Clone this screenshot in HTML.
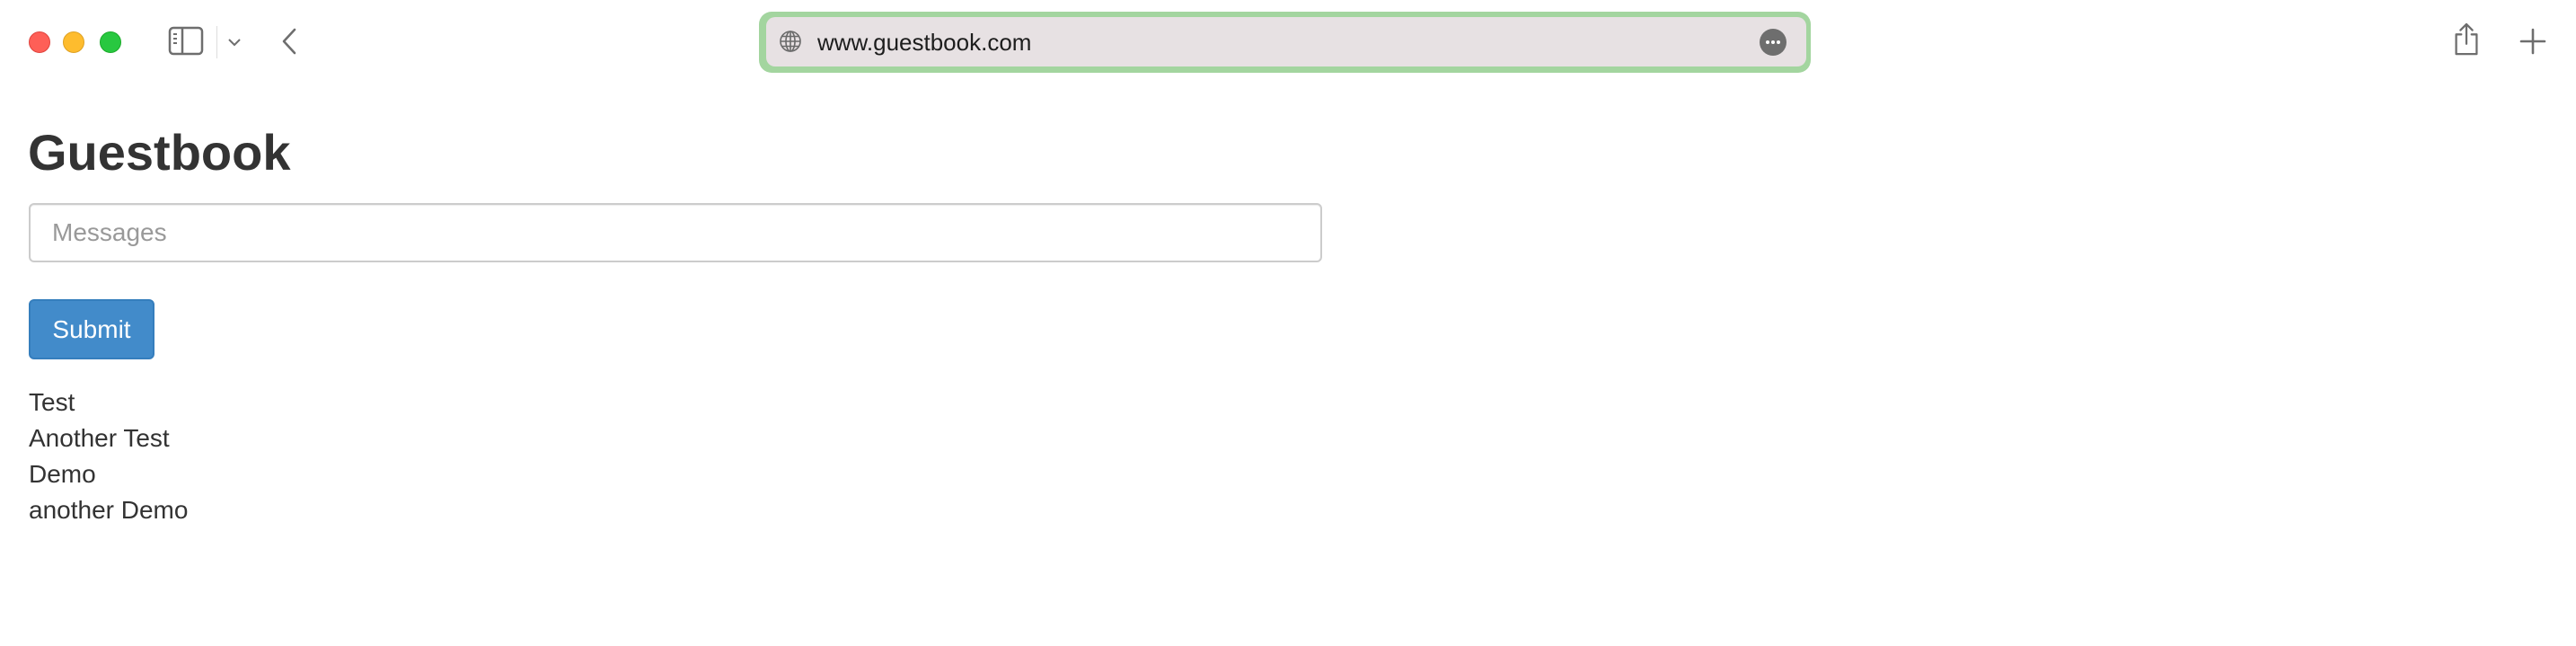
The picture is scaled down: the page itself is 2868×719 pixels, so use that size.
<!DOCTYPE html>
<html><head><meta charset="utf-8"><style>
*{margin:0;padding:0;box-sizing:border-box}
body{width:2868px;height:719px;background:#fff;position:relative;overflow:hidden;font-family:"Liberation Sans",Helvetica,Arial,sans-serif;color:#333}
.abs{position:absolute}
.dot{position:absolute;width:24px;height:24px;border-radius:50%;top:35px}
</style></head><body>
<div class="dot" style="left:32px;background:#fe5f57;border:1px solid #e0443e"></div>
<div class="dot" style="left:70px;background:#febc2e;border:1px solid #dea123"></div>
<div class="dot" style="left:111px;background:#28c840;border:1px solid #1aab29"></div>
<svg class="abs" style="left:186px;top:29px" width="42" height="34" viewBox="0 0 42 34"><rect x="3" y="2" width="36" height="29" rx="4" fill="none" stroke="#6e6e6e" stroke-width="2.5"/><line x1="17" y1="2" x2="17" y2="31" stroke="#6e6e6e" stroke-width="2.5"/><line x1="7" y1="9" x2="11" y2="9" stroke="#6e6e6e" stroke-width="2"/><line x1="7" y1="14" x2="11" y2="14" stroke="#6e6e6e" stroke-width="2"/><line x1="7" y1="19" x2="11" y2="19" stroke="#6e6e6e" stroke-width="2"/></svg>
<div class="abs" style="left:241px;top:29px;width:1px;height:36px;background:#ddd"></div>
<svg class="abs" style="left:252px;top:40px" width="18" height="14"><path d="M3 4 L9 10 L15 4" fill="none" stroke="#6e6e6e" stroke-width="2"/></svg>
<svg class="abs" style="left:308px;top:30px" width="26" height="32"><path d="M20 3 L8 16 L20 29" fill="none" stroke="#6e6e6e" stroke-width="2.6" stroke-linecap="round" stroke-linejoin="round"/></svg>
<div class="abs" style="left:845px;top:13px;width:1171px;height:68px;border-radius:14px;background:#a3d59f"></div>
<div class="abs" style="left:853px;top:19px;width:1158px;height:55px;border-radius:10px;background:#e7e1e3"></div>
<svg class="abs" style="left:867px;top:33px" width="26" height="26" viewBox="0 0 26 26" fill="none" stroke="#6a6a6a" stroke-width="1.6"><circle cx="13" cy="13" r="11"/><ellipse cx="13" cy="13" rx="5" ry="11"/><line x1="13" y1="2" x2="13" y2="24"/><line x1="2" y1="13" x2="24" y2="13"/><path d="M4 7.5 H22 M4 18.5 H22"/></svg>
<div class="abs" style="left:910px;top:31px;font-size:26px;line-height:32px;color:#1d1d1d">www.guestbook.com</div>
<div class="abs" style="left:1959px;top:32px;width:30px;height:30px;border-radius:50%;background:#6e6e6e"></div>
<svg class="abs" style="left:1959px;top:32px" width="30" height="30"><circle cx="9" cy="15" r="2" fill="#fff"/><circle cx="15" cy="15" r="2" fill="#fff"/><circle cx="21" cy="15" r="2" fill="#fff"/></svg>
<svg class="abs" style="left:2727px;top:24px" width="38" height="40" viewBox="0 0 40 42" fill="none" stroke="#6e6e6e" stroke-width="2.4" stroke-linecap="round" stroke-linejoin="round"><path d="M14 15 H8 V38 H32 V15 H26"/><path d="M20 3 V26 M13 10 L20 3 L27 10"/></svg>
<svg class="abs" style="left:2804px;top:30px" width="32" height="32"><path d="M16 3 V29 M3 16 H29" stroke="#6e6e6e" stroke-width="2.6" stroke-linecap="round"/></svg>

<div class="abs" style="left:31px;top:142px;font-size:56px;line-height:56px;font-weight:bold;color:#333">Guestbook</div>
<div class="abs" style="left:32px;top:226px;width:1440px;height:66px;border:2px solid #ccc;border-radius:6px;box-shadow:inset 0 1px 1px rgba(0,0,0,.075)"></div>
<div class="abs" style="left:58px;top:240px;font-size:28px;line-height:38px;color:#999">Messages</div>
<div class="abs" style="left:32px;top:333px;width:140px;height:67px;background:#428bca;border:2px solid #357ebd;border-radius:6px;color:#fff;font-size:28px;line-height:63px;text-align:center">Submit</div>
<div class="abs" style="left:32px;top:428px;font-size:28px;line-height:40px;color:#333">Test<br>Another Test<br>Demo<br>another Demo</div>
</body></html>
